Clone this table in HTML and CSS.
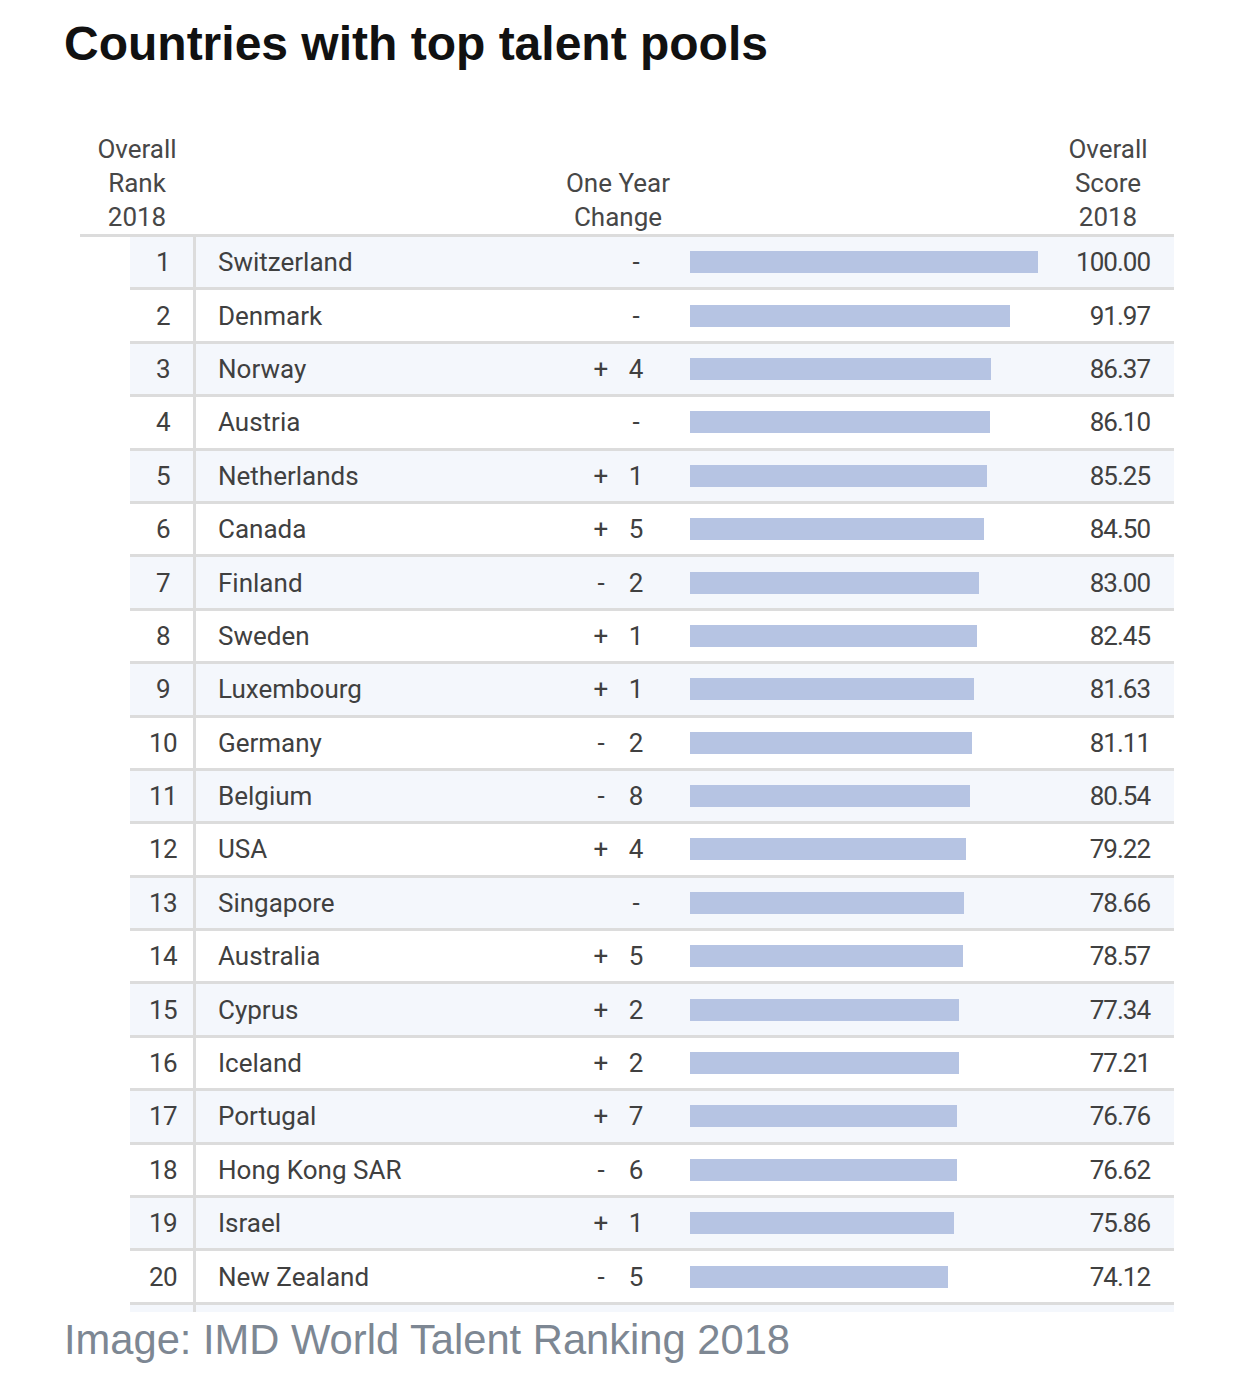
FILE: index.html
```html
<!DOCTYPE html>
<html lang="en">
<head>
<meta charset="utf-8">
<title>Countries with top talent pools</title>
<link rel="stylesheet" href="styles.css">
</head>
<body>
<h1 class="title">Countries with top talent pools</h1>
<div class="table">
  <div class="head">
    <div class="h-rank">Overall<br>Rank<br>2018</div>
    <div></div>
    <div class="h-change">One Year<br>Change</div>
    <div></div>
    <div class="h-score">Overall<br>Score<br>2018</div>
  </div>
  <div class="rows">
    <div class="row"><div class="rank">1</div><div class="country">Switzerland</div><div class="sign"></div><div class="num">-</div><div class="bar-cell"><div class="bar" style="width:100%"></div></div><div class="score">100.00</div></div>
    <div class="row"><div class="rank">2</div><div class="country">Denmark</div><div class="sign"></div><div class="num">-</div><div class="bar-cell"><div class="bar" style="width:91.97%"></div></div><div class="score">91.97</div></div>
    <div class="row"><div class="rank">3</div><div class="country">Norway</div><div class="sign">+</div><div class="num">4</div><div class="bar-cell"><div class="bar" style="width:86.37%"></div></div><div class="score">86.37</div></div>
    <div class="row"><div class="rank">4</div><div class="country">Austria</div><div class="sign"></div><div class="num">-</div><div class="bar-cell"><div class="bar" style="width:86.10%"></div></div><div class="score">86.10</div></div>
    <div class="row"><div class="rank">5</div><div class="country">Netherlands</div><div class="sign">+</div><div class="num">1</div><div class="bar-cell"><div class="bar" style="width:85.25%"></div></div><div class="score">85.25</div></div>
    <div class="row"><div class="rank">6</div><div class="country">Canada</div><div class="sign">+</div><div class="num">5</div><div class="bar-cell"><div class="bar" style="width:84.50%"></div></div><div class="score">84.50</div></div>
    <div class="row"><div class="rank">7</div><div class="country">Finland</div><div class="sign">-</div><div class="num">2</div><div class="bar-cell"><div class="bar" style="width:83.00%"></div></div><div class="score">83.00</div></div>
    <div class="row"><div class="rank">8</div><div class="country">Sweden</div><div class="sign">+</div><div class="num">1</div><div class="bar-cell"><div class="bar" style="width:82.45%"></div></div><div class="score">82.45</div></div>
    <div class="row"><div class="rank">9</div><div class="country">Luxembourg</div><div class="sign">+</div><div class="num">1</div><div class="bar-cell"><div class="bar" style="width:81.63%"></div></div><div class="score">81.63</div></div>
    <div class="row"><div class="rank">10</div><div class="country">Germany</div><div class="sign">-</div><div class="num">2</div><div class="bar-cell"><div class="bar" style="width:81.11%"></div></div><div class="score">81.11</div></div>
    <div class="row"><div class="rank">11</div><div class="country">Belgium</div><div class="sign">-</div><div class="num">8</div><div class="bar-cell"><div class="bar" style="width:80.54%"></div></div><div class="score">80.54</div></div>
    <div class="row"><div class="rank">12</div><div class="country">USA</div><div class="sign">+</div><div class="num">4</div><div class="bar-cell"><div class="bar" style="width:79.22%"></div></div><div class="score">79.22</div></div>
    <div class="row"><div class="rank">13</div><div class="country">Singapore</div><div class="sign"></div><div class="num">-</div><div class="bar-cell"><div class="bar" style="width:78.66%"></div></div><div class="score">78.66</div></div>
    <div class="row"><div class="rank">14</div><div class="country">Australia</div><div class="sign">+</div><div class="num">5</div><div class="bar-cell"><div class="bar" style="width:78.57%"></div></div><div class="score">78.57</div></div>
    <div class="row"><div class="rank">15</div><div class="country">Cyprus</div><div class="sign">+</div><div class="num">2</div><div class="bar-cell"><div class="bar" style="width:77.34%"></div></div><div class="score">77.34</div></div>
    <div class="row"><div class="rank">16</div><div class="country">Iceland</div><div class="sign">+</div><div class="num">2</div><div class="bar-cell"><div class="bar" style="width:77.21%"></div></div><div class="score">77.21</div></div>
    <div class="row"><div class="rank">17</div><div class="country">Portugal</div><div class="sign">+</div><div class="num">7</div><div class="bar-cell"><div class="bar" style="width:76.76%"></div></div><div class="score">76.76</div></div>
    <div class="row"><div class="rank">18</div><div class="country">Hong Kong SAR</div><div class="sign">-</div><div class="num">6</div><div class="bar-cell"><div class="bar" style="width:76.62%"></div></div><div class="score">76.62</div></div>
    <div class="row"><div class="rank">19</div><div class="country">Israel</div><div class="sign">+</div><div class="num">1</div><div class="bar-cell"><div class="bar" style="width:75.86%"></div></div><div class="score">75.86</div></div>
    <div class="row"><div class="rank">20</div><div class="country">New Zealand</div><div class="sign">-</div><div class="num">5</div><div class="bar-cell"><div class="bar" style="width:74.12%"></div></div><div class="score">74.12</div></div>
    <div class="stub"><div></div><div class="stub-div"></div></div>
  </div>
</div>
<p class="caption">Image: IMD World Talent Ranking 2018</p>
</body>
</html>
```
FILE: styles.css
```css
html, body {
  margin: 0;
  padding: 0;
  background: #ffffff;
}

.title {
  margin: 17px 0 0 64px;
  font-family: "Liberation Sans", Arial, sans-serif;
  font-weight: 700;
  font-size: 48px;
  line-height: 54px;
  color: #111111;
}

.table {
  margin: 61px 0 0 80px;
  width: 1094px;
  font-family: Roboto, "Noto Sans", sans-serif;
  font-size: 26px;
  color: #404040;
}

.head {
  display: grid;
  grid-template-columns: 114px 354px 140px 360px 120px 6px;
  border-bottom: 3px solid #dcdcdc;
  line-height: 34px;
  color: #474747;
}

.h-rank, .h-change, .h-score {
  text-align: center;
}

.h-change {
  align-self: end;
}

.rows {
  margin-left: 50px;
}

.row {
  display: grid;
  grid-template-columns: 63px 393px 30px 40px 382px 1fr;
  align-items: center;
  height: 50.4px;
  border-bottom: 3px solid #dcdcdc;
}

.row:nth-child(odd) {
  background: #f4f7fc;
}

.rank {
  align-self: stretch;
  display: flex;
  align-items: center;
  justify-content: center;
  padding-left: 3px;
  letter-spacing: -0.5px;
}

.country {
  align-self: stretch;
  display: flex;
  align-items: center;
  border-left: 3px solid #dcdcdc;
  padding-left: 22px;
}

.sign, .num {
  text-align: center;
}

.bar-cell {
  height: 22px;
  padding-left: 34px;
}

.bar {
  height: 100%;
  background: #b6c4e3;
}

.score {
  text-align: right;
  padding-right: 24px;
  letter-spacing: -1px;
}

.stub {
  display: grid;
  grid-template-columns: 63px 1fr;
  height: 7px;
  background: #f4f7fc;
}

.stub-div {
  border-left: 3px solid #dcdcdc;
}

.caption {
  margin: 5px 0 0 64px;
  font-family: "Liberation Sans", Arial, sans-serif;
  font-size: 41.7px;
  line-height: 46px;
  color: #7d8793;
}
```
